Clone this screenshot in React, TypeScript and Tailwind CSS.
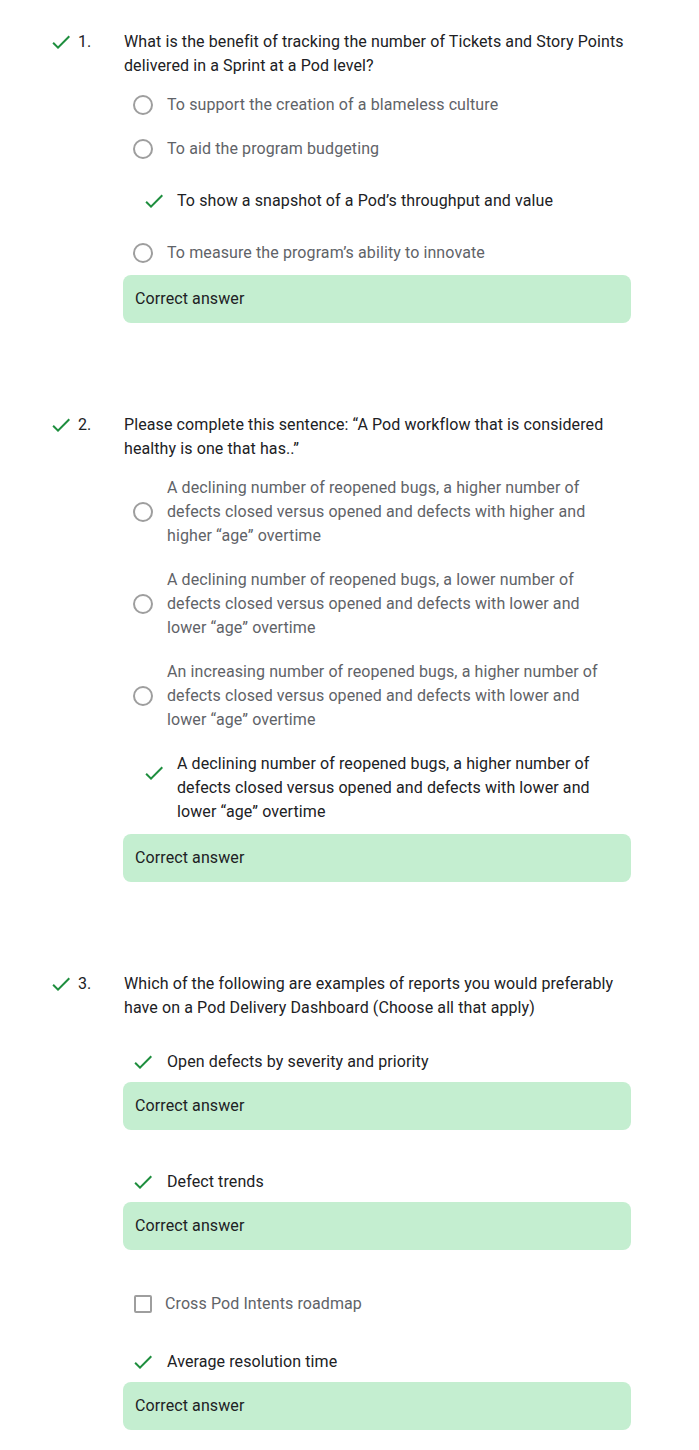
import React from 'react';

type Opt = {
  text: string;
  kind: 'radio' | 'checked' | 'box';
  wrap: string;
  icon?: string;
  correct?: boolean;
};

interface Question {
  num: number;
  title: string;
  wrap: string;
  options: Opt[];
  boxAfterAll?: boolean;
}

const questions: Question[] = [
  {
    num: 1,
    title: 'What is the benefit of tracking the number of Tickets and Story Points delivered in a Sprint at a Pod level?',
    wrap: 'mt-[30px]',
    boxAfterAll: true,
    options: [
      { text: 'To support the creation of a blameless culture', kind: 'radio', wrap: 'mt-[5px] py-[10px]' },
      { text: 'To aid the program budgeting', kind: 'radio', wrap: 'py-[10px]' },
      { text: 'To show a snapshot of a Pod\u2019s throughput and value', kind: 'checked', wrap: 'pt-[18px] pb-[18px] pl-[10px]', icon: 'mt-0' },
      { text: 'To measure the program\u2019s ability to innovate', kind: 'radio', wrap: 'py-[10px]' },
    ],
  },
  {
    num: 2,
    title: 'Please complete this sentence: \u201cA Pod workflow that is considered healthy is one that has..\u201d',
    wrap: 'mt-[90px]',
    boxAfterAll: true,
    options: [
      { text: 'A declining number of reopened bugs, a higher number of defects closed versus opened and defects with higher and higher \u201cage\u201d overtime', kind: 'radio', wrap: 'mt-[5px] py-[10px]' },
      { text: 'A declining number of reopened bugs, a lower number of defects closed versus opened and defects with lower and lower \u201cage\u201d overtime', kind: 'radio', wrap: 'py-[10px]' },
      { text: 'An increasing number of reopened bugs, a higher number of defects closed versus opened and defects with lower and lower \u201cage\u201d overtime', kind: 'radio', wrap: 'py-[10px]' },
      { text: 'A declining number of reopened bugs, a higher number of defects closed versus opened and defects with lower and lower \u201cage\u201d overtime', kind: 'checked', wrap: 'pt-[10px] pb-[10px] pl-[10px]', icon: 'mt-[9px]' },
    ],
  },
  {
    num: 3,
    title: 'Which of the following are examples of reports you would preferably have on a Pod Delivery Dashboard (Choose all that apply)',
    wrap: 'mt-[90px]',
    options: [
      { text: 'Open defects by severity and priority', kind: 'checked', wrap: 'mt-[30px] pb-[8px]', icon: 'mt-0', correct: true },
      { text: 'Defect trends', kind: 'checked', wrap: 'mt-[40px] pb-[8px]', icon: 'mt-0', correct: true },
      { text: 'Cross Pod Intents roadmap', kind: 'box', wrap: 'mt-[42px]' },
      { text: 'Average resolution time', kind: 'checked', wrap: 'mt-[34px] pb-[8px]', icon: 'mt-0', correct: true },
    ],
  },
];

function Check({ className }: { className?: string }) {
  return (
    <svg viewBox="0 0 24 24" className={className} fill="#1e8e3e">
      <path d="M9 16.17 4.83 12l-1.42 1.41L9 19 21 7l-1.41-1.41z" />
    </svg>
  );
}

function CorrectBox() {
  return (
    <div className="ml-[-1px] w-[508px] h-12 rounded-lg bg-[#c4eed0] flex items-center pl-3 text-[#202124]">
      Correct answer
    </div>
  );
}

function Option({ opt, q3 }: { opt: Opt; q3: boolean }) {
  if (opt.kind === 'checked') {
    return (
      <div className={opt.wrap}>
        <div className="flex items-start">
          <Check className={`w-6 h-6 shrink-0 ${q3 ? 'ml-[7px]' : 'ml-[8px]'} ${opt.icon ?? ''}`} />
          <span className={q3 ? 'ml-[12px] text-[#202124]' : 'ml-[11px] pr-5 text-[#202124]'}>
            {opt.text}
          </span>
        </div>
      </div>
    );
  }
  if (opt.kind === 'box') {
    return (
      <div className={opt.wrap}>
        <div className="flex items-center">
          <div className="w-[18px] h-[18px] ml-[10px] border-2 border-[#9e9e9e] rounded-[2px] shrink-0" />
          <span className="ml-[13px] text-[#5f6368]">{opt.text}</span>
        </div>
      </div>
    );
  }
  return (
    <div className={opt.wrap}>
      <div className="flex items-center">
        <div className="w-5 h-5 ml-[9px] rounded-full border-2 border-[#9e9e9e] shrink-0" />
        <span className="ml-[14px] pr-5 text-[#5f6368]">{opt.text}</span>
      </div>
    </div>
  );
}

export default function App() {
  return (
    <div className="w-[699px] min-h-[1450px] bg-white font-['Roboto',sans-serif] text-[16px] tracking-[0.1px] leading-6 text-[#202124]">
      {questions.map((q) => (
        <div key={q.num} className={`${q.wrap} flex`}>
          <div className="w-[124px] shrink-0 flex items-start">
            <Check className="w-6 h-6 ml-[49px] shrink-0" />
            <span className="ml-[5px]">{q.num}.</span>
          </div>
          <div className="w-[508px]">
            <div className="pr-2">{q.title}</div>
            {q.options.map((o, i) => (
              <React.Fragment key={i}>
                <Option opt={o} q3={q.num === 3} />
                {o.correct && <CorrectBox />}
              </React.Fragment>
            ))}
            {q.boxAfterAll && <CorrectBox />}
          </div>
        </div>
      ))}
    </div>
  );
}
